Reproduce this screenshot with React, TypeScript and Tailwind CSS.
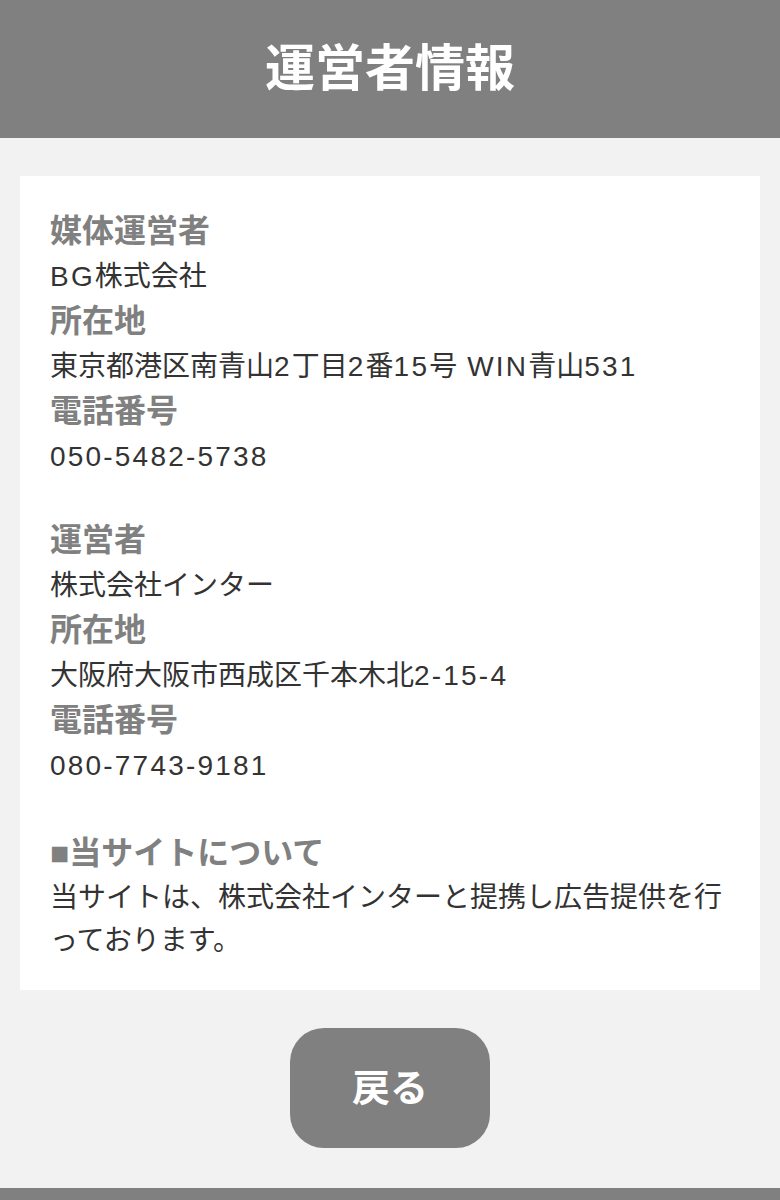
const FONT = "font-['Liberation_Sans','Noto_Sans_CJK_JP',sans-serif]"

const SECTIONS = [
  [
    { label: '媒体運営者', value: 'BG株式会社' },
    { label: '所在地', value: '東京都港区南青山2丁目2番15号 WIN青山531' },
    { label: '電話番号', value: '050-5482-5738' },
  ],
  [
    { label: '運営者', value: '株式会社インター' },
    { label: '所在地', value: '大阪府大阪市西成区千本木北2-15-4' },
    { label: '電話番号', value: '080-7743-9181' },
  ],
]

// latin runs are set a little wider, like the reference's system font
function Wide({ text }: { text: string }) {
  return (
    <>
      {text.split(/([\x20-\x7e]+)/).map((part, i) =>
        /[\x20-\x7e]/.test(part) ? (
          <span key={i} className="tracking-[2.2px]">{part}</span>
        ) : (
          part
        ),
      )}
    </>
  )
}

function Label({ children }: { children: string }) {
  return <p className="text-[32px] leading-[45px] font-bold text-[#808080]">{children}</p>
}

function Value({ children }: { children: string }) {
  return (
    <p className="text-[28px] leading-[45px] text-[#333333]">
      <Wide text={children} />
    </p>
  )
}

export default function App() {
  return (
    <div className={`${FONT} min-h-[1200px] bg-[#f2f2f2] flex flex-col`}>
      {/* Header */}
      <header className="h-[138px] bg-[#808080] flex items-center justify-center">
        <h1 className="text-[50px] font-bold text-white leading-none">運営者情報</h1>
      </header>

      {/* Info card */}
      <main className="px-5 pt-[38px]">
        <div className="bg-white px-[30px] pt-[33px] pb-[28px]">
          {SECTIONS.map((rows, i) => (
            <div key={i} className={i === 0 ? 'mb-[39px]' : 'mb-[43px]'}>
              {rows.map((r) => (
                <div key={r.label + r.value}>
                  <Label>{r.label}</Label>
                  <Value>{r.value}</Value>
                </div>
              ))}
            </div>
          ))}
          <Label>■当サイトについて</Label>
          <p className="text-[28px] leading-[43px] text-[#333333]">
            当サイトは、株式会社インターと提携し広告提供を行っております。
          </p>
        </div>
      </main>

      {/* Back button */}
      <div className="flex justify-center pt-[38px] pb-[40px]">
        <button className="w-[200px] h-[120px] rounded-[34px] bg-[#808080] text-white text-[38px] font-bold">
          戻る
        </button>
      </div>

      <footer className="flex-1 min-h-[60px] bg-[#808080]" />
    </div>
  )
}
